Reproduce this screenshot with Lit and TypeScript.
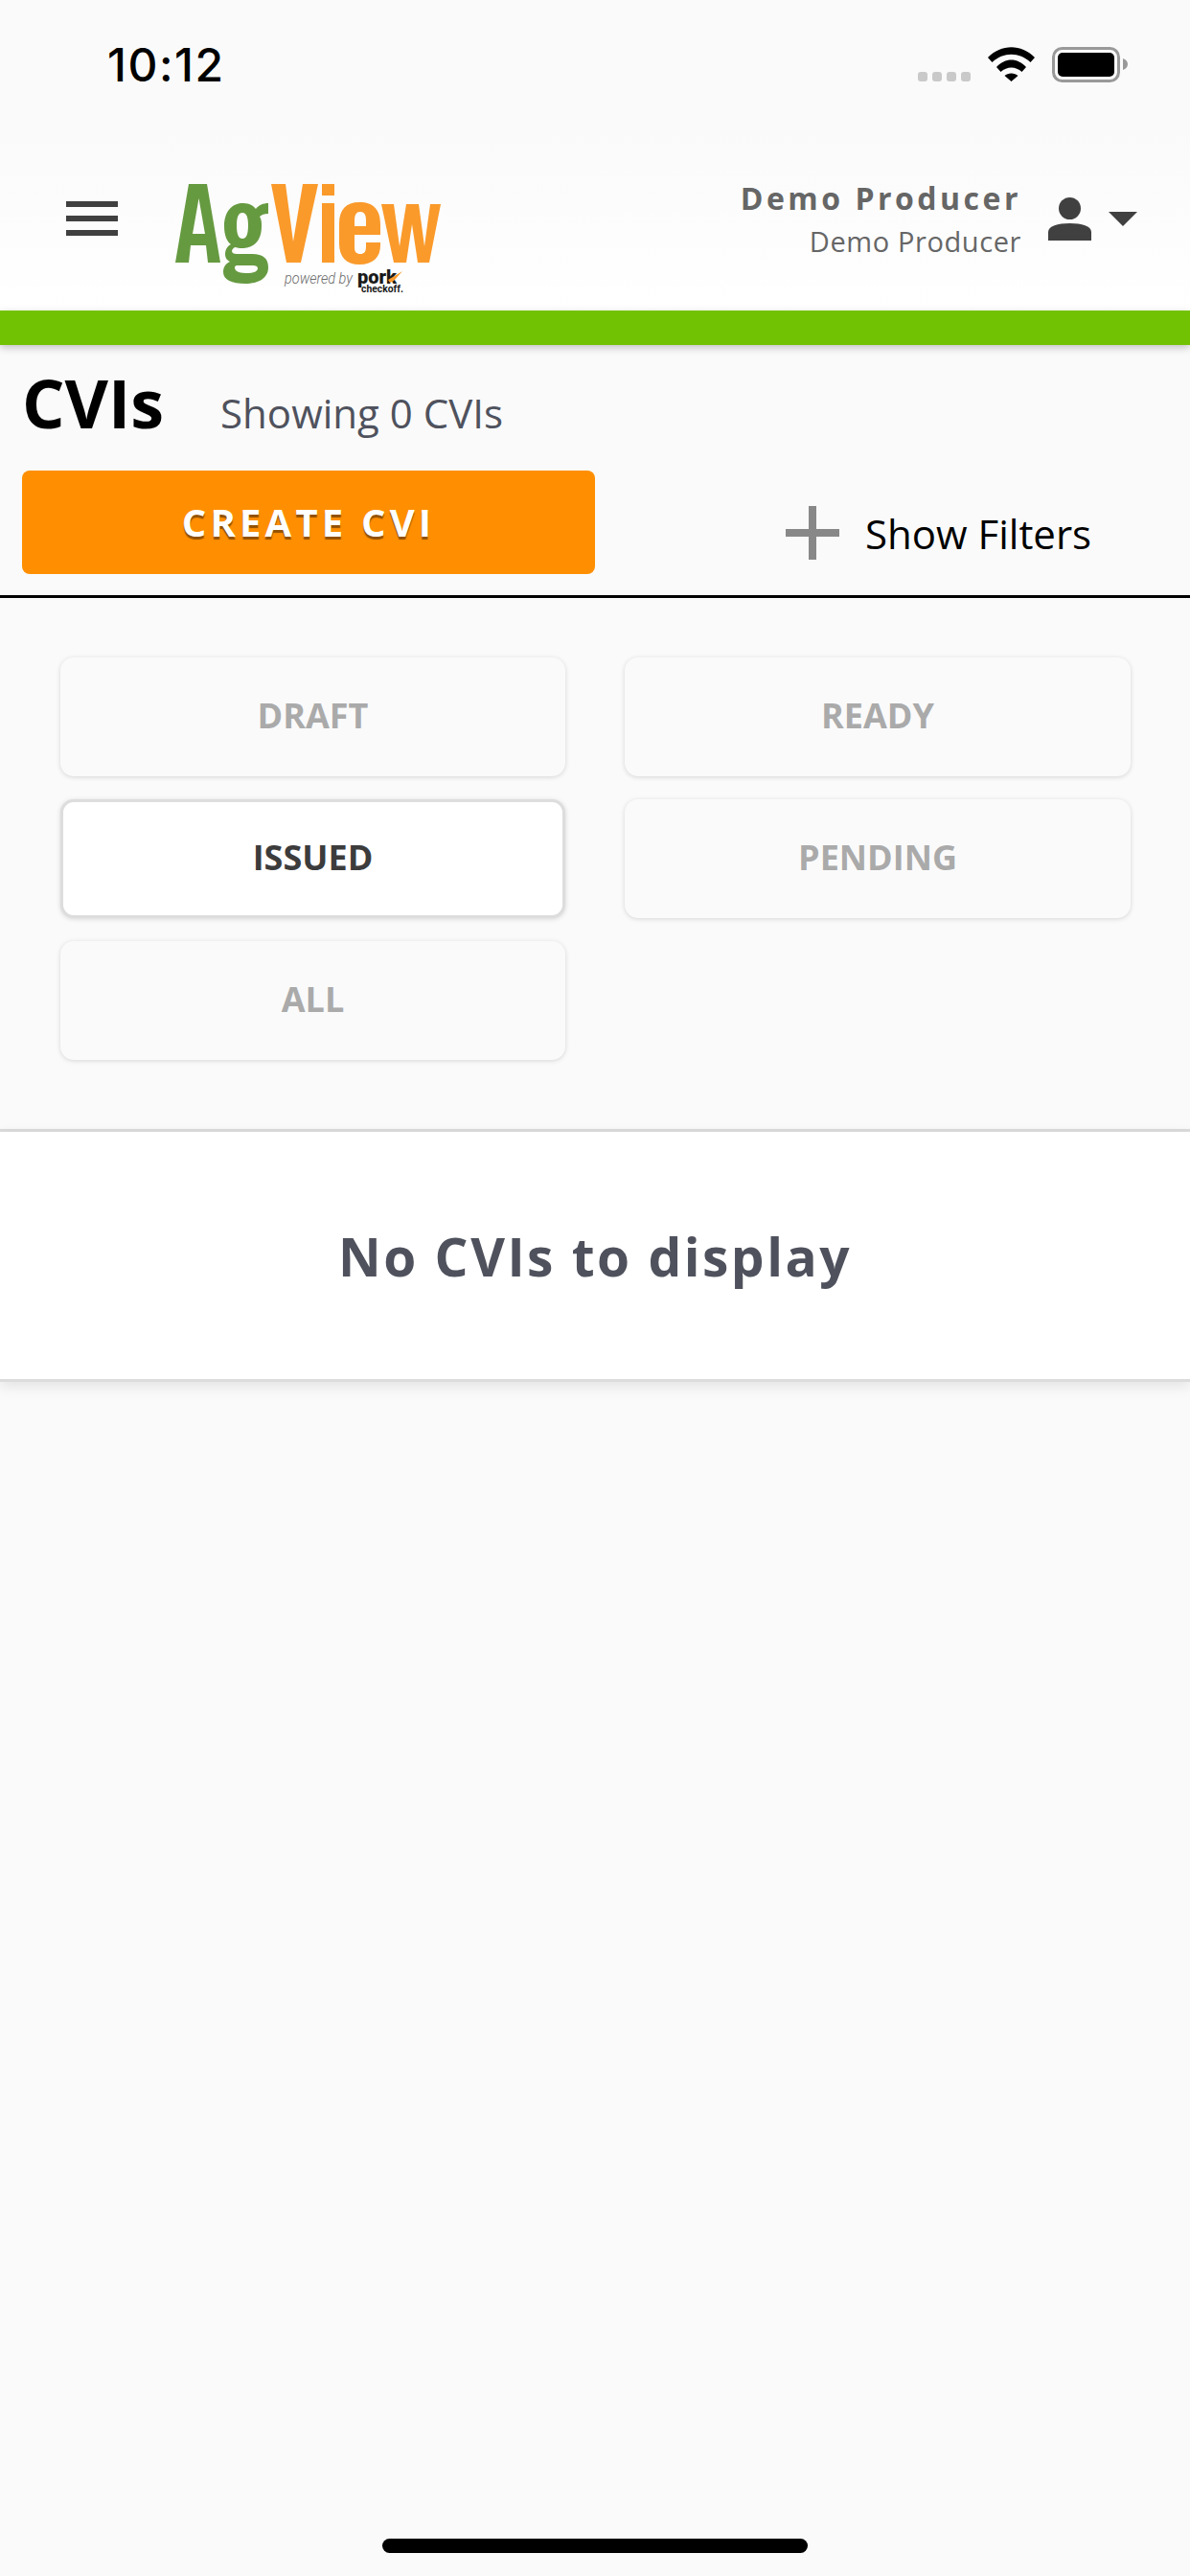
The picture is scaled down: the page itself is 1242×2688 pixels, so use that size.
import { LitElement, html, css, svg } from "lit";
import { customElement, state } from "lit/decorators.js";
import { classMap } from "lit/directives/class-map.js";

const TABS = ["DRAFT", "READY", "ISSUED", "PENDING", "ALL"];

const logo = svg`
  <svg class="logo" width="280" height="116" viewBox="0 0 280 116">
    <g fill="#669a41" fill-rule="evenodd">
      <path d="M14 0H33L47 82H34L32 64H16L14 82H0ZM24.500 15L18 52H31Z"/>
      <path d="M97 20V31C93 31 90 32 88 34C90 37 90 40 90 44C90 59 82 67 70 67C67 67 64 66.500 62 66C60 67 59 69 59 70C59 72 61 73 64 73H80C92 73 97 78 97 87C97 98 87 104 73 104C59 104 50 100 50 92C50 86 53 83 57 81C53 79 52 76 52 73C52 69 54 65 58 63C54 60 51 54 51 44C51 29 59 20 70 20C77 20 81 22 84 26C87 22 92 20 97 20ZM70 30C66 30 64 34 64 43C64 53 66 57 70 57C74 57 76 53 76 43C76 34 74 30 70 30ZM62 87C62 91 66 93 74 93C82 93 86 91 86 88C86 86 84 85 81 85H64C63 85 62 86 62 87Z"/>
    </g>
    <g fill="#fa9a2b" fill-rule="evenodd">
      <path d="M100 0H115L123 60L133 0H149L131 82H116Z"/>
      <path d="M153 0H166V12H153ZM153 20H166V82H153Z"/>
      <path d="M192 19C207 19 214 27 214 42V53H187V66C187 71 189 73 193 73C197 73 199 71 199 65V61H214V64C214 76 207 84 192 84C178 84 171 76 171 62V41C171 27 178 19 192 19ZM187 44H199V38C199 32 197 29 193 29C189 29 187 32 187 38Z"/>
      <path d="M215 21H228L234 65L241 21H254L260 65L266 21H277L265 82H253L247 42L241 82H228Z"/>
    </g>
    <text x="114" y="104" class="powered" textLength="71" lengthAdjust="spacingAndGlyphs">powered by</text>
    <text x="190" y="104" class="pork" textLength="41" lengthAdjust="spacingAndGlyphs">pork</text>
    <text x="194" y="113" class="checkoff" textLength="44" lengthAdjust="spacingAndGlyphs">checkoff.</text>
    <path d="M222 100L237 91L228 101L224 103Z" fill="#fa9a2b"/>
  </svg>
`;

@customElement("app-root")
export class AppRoot extends LitElement {
  @state() active = "ISSUED";

  static styles = css`
    :host {
      display: block;
      width: 1242px;
      height: 2688px;
      position: relative;
      overflow: hidden;
      background: #fafafa;
      font-family: "Open Sans", sans-serif;
    }

    .status {
      height: 132px;
      box-sizing: border-box;
      padding: 0 64px 0 112px;
      display: flex;
      justify-content: space-between;
      background: #fafafa;
    }

    .clock {
      font-family: Inter, "Liberation Sans", sans-serif;
      font-weight: 500;
      font-size: 48px;
      line-height: 48px;
      margin-top: 44px;
      letter-spacing: 1.5px;
      color: #000;
    }

    .status-icons {
      display: flex;
      align-items: flex-start;
      gap: 18px;
      margin-top: 49px;
    }

    .header {
      height: 192px;
      box-sizing: border-box;
      padding: 0 55px 0 69px;
      display: flex;
      align-items: flex-start;
      background: linear-gradient(#fafafa, #ffffff);
    }

    .burger {
      width: 54px;
      height: 36px;
      margin-top: 78px;
      display: flex;
      flex-direction: column;
      justify-content: space-between;
    }

    .burger span {
      height: 6px;
      background: #404040;
    }

    .logo {
      margin: 60px 0 0 60px;
      overflow: visible;
      flex: none;
    }

    .powered {
      font: italic 300 16px "Roboto", sans-serif;
      fill: #6b6b6b;
    }

    .pork {
      font: 900 20px "Roboto", sans-serif;
      fill: #1a1a1a;
    }

    .checkoff {
      font: 700 10px "Roboto", sans-serif;
      fill: #1a1a1a;
    }

    .user {
      margin-left: auto;
      margin-top: 53px;
      text-align: right;
      color: #666;
    }

    .user-name {
      font-weight: 700;
      font-size: 32px;
      line-height: 44px;
      letter-spacing: 3.5px;
    }

    .user-role {
      font-size: 29px;
      line-height: 46px;
      font-weight: 400;
      letter-spacing: 0.6px;
    }

    .user-icon {
      margin: 74px 0 0 28px;
      flex: none;
    }

    .caret {
      margin: 89px 0 0 18px;
      flex: none;
    }

    .green {
      height: 36px;
      background: #72c204;
      box-shadow: 0 3px 8px rgba(0, 0, 0, 0.22);
      position: relative;
    }

    .title-row {
      display: flex;
      align-items: baseline;
      padding: 17px 0 0 23px;
      height: 131px;
      box-sizing: border-box;
    }

    .title {
      font-weight: 700;
      font-size: 70px;
      line-height: 87px;
      color: #000;
    }

    .count {
      font-size: 42px;
      margin-left: 59px;
      color: #4f525d;
    }

    .actions {
      display: flex;
      height: 133px;
      box-sizing: border-box;
      padding: 0 0 22px 23px;
      border-bottom: 3px solid #000;
    }

    .create {
      width: 598px;
      height: 108px;
      border: none;
      border-radius: 8px;
      background: #ff8f00;
      color: #fff;
      font-family: inherit;
      font-weight: 700;
      font-size: 40px;
      letter-spacing: 4.2px;
      text-shadow: 0 3px 1px rgba(110, 60, 0, 0.75);
      padding: 0 0 2px;
    }

    .filters {
      display: flex;
      align-items: center;
      margin: 37px 0 0 199px;
      height: 56px;
      gap: 27px;
      font-size: 42px;
      color: #000;
    }

    .tabs {
      display: grid;
      grid-template-columns: 527px 528px;
      column-gap: 62px;
      row-gap: 24px;
      padding: 62px 0 0 63px;
      height: 557px;
      box-sizing: border-box;
      align-content: start;
      border-bottom: 3px solid #dcdcdc;
    }

    .tab {
      height: 124px;
      box-sizing: border-box;
      padding-bottom: 3px;
      border-radius: 14px;
      background: #fafafa;
      box-shadow: 0 1px 5px rgba(0, 0, 0, 0.15);
      display: flex;
      align-items: center;
      justify-content: center;
      font-weight: 700;
      font-size: 36px;
      color: #aaa;
    }

    .tab.active {
      background: #fff;
      color: #3c3c3c;
      border: 3px solid #ddd;
    }

    .empty {
      height: 261px;
      box-sizing: border-box;
      background: #fff;
      display: flex;
      align-items: center;
      justify-content: center;
      font-weight: 700;
      font-size: 55px;
      letter-spacing: 2.5px;
      color: #4f525d;
      box-shadow: 0 4px 14px rgba(0, 0, 0, 0.1);
      border-bottom: 3px solid #dcdcdc;
    }

    .home-bar {
      position: absolute;
      left: 399px;
      bottom: 24px;
      width: 444px;
      height: 15px;
      border-radius: 8px;
      background: #000;
    }
  `;

  render() {
    return html`
      <div class="status">
        <span class="clock">10:12</span>
        <div class="status-icons">
          <svg width="122" height="37" viewBox="0 0 122 37">
            <g fill="#c9c9c9">
              <rect x="0" y="26" width="10" height="10" rx="3"/>
              <rect x="15" y="26" width="10" height="10" rx="3"/>
              <rect x="30" y="26" width="10" height="10" rx="3"/>
              <rect x="45" y="26" width="10" height="10" rx="3"/>
            </g>
            <path d="M73 11C87-3.500 108-3.500 122 11L117.500 16C106 5 89 5 77.500 16ZM82 21C91 11 104 11 113 21L108.500 26C102 20 93 20 86.500 26ZM90.500 30C94 26.500 101 26.500 104.500 30L97.500 36Z" fill="#000"/>
          </svg>
          <svg width="80" height="37" viewBox="0 0 80 37">
            <rect x="1.500" y="1.500" width="68" height="34" rx="9" fill="none" stroke="#999" stroke-width="3"/>
            <rect x="6" y="6" width="59" height="25" rx="5" fill="#000"/>
            <path d="M74 12c3 1 5 3 5 6s-2 5-5 6z" fill="#999"/>
          </svg>
        </div>
      </div>

      <div class="header">
        <div class="burger"><span></span><span></span><span></span></div>
        ${logo}
        <div class="user">
          <div class="user-name">Demo Producer</div>
          <div class="user-role">Demo Producer</div>
        </div>
        <svg class="user-icon" width="45" height="45" viewBox="0 0 45 45">
          <ellipse cx="22.500" cy="11.500" rx="11.500" ry="11.500" fill="#404040"/>
          <path d="M0 45V36c0-6 10-9 22.500-9S45 30 45 36v9z" fill="#404040"/>
        </svg>
        <svg class="caret" width="30" height="15" viewBox="0 0 30 15">
          <path d="M0 0h30L15 15z" fill="#404040"/>
        </svg>
      </div>

      <div class="green"></div>

      <div class="title-row">
        <span class="title">CVIs</span>
        <span class="count">Showing 0 CVIs</span>
      </div>

      <div class="actions">
        <button class="create">CREATE CVI</button>
        <div class="filters">
          <svg width="56" height="56" viewBox="0 0 56 56">
            <path d="M24 0h8v56h-8zM0 24h56v8H0z" fill="#888"/>
          </svg>
          <span>Show Filters</span>
        </div>
      </div>

      <div class="tabs">
        ${TABS.map(
          (t) => html`<div class=${classMap({ tab: true, active: t === this.active })}>${t}</div>`
        )}
      </div>

      <div class="empty">No CVIs to display</div>

      <div class="home-bar"></div>
    `;
  }
}
